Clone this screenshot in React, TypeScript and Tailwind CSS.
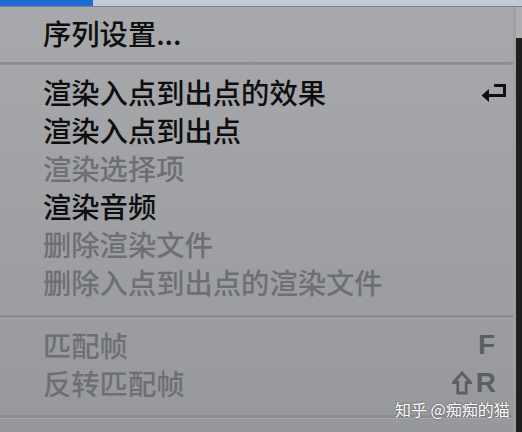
import React from "react";

const font = { fontFamily: '"Noto Sans CJK SC", "Noto Sans", sans-serif' };
const latin = { fontFamily: '"Liberation Sans", Arial, sans-serif' };

function Item({ label, enabled = true, shortcut }: { label: string; enabled?: boolean; shortcut?: React.ReactNode }) {
  return (
    <div className="h-[38px] flex items-center justify-between pl-[43px] pr-[5px] pb-[4px]">
      <span className={`text-[28.3px] leading-none font-medium ${enabled ? "text-[#0e0e0f]" : "text-[#6e6f73]"}`}>{label}</span>
      {shortcut}
    </div>
  );
}

function Sep() {
  return (
    <div className="flex flex-col">
      <div className="h-[3px] bg-[#8d8e92]" />
      <div className="h-px bg-[#a9aaae]" />
    </div>
  );
}

export default function App() {
  return (
    <div className="w-[522px] h-[432px] overflow-hidden flex flex-col relative bg-[#222]" style={font}>
      <div className="h-[6px] flex">
        <div className="w-[93px] bg-[#1f6bd6]" />
        <div className="flex-1 bg-[#c2c9d6]" />
      </div>
      <div className="h-px bg-[#7d7e82]" />
      <div className="flex-1 flex">
        <div className="w-[516px] flex flex-col bg-gradient-to-b from-[#a8a9ac] to-[#97989c] border-r-[3px] border-[#a0a1a4]">
          <div className="h-[9px]" />
          <Item label="序列设置..." />
          <div className="h-[8px]" />
          <Sep />
          <div className="h-[9px]" />
          <Item
            label="渲染入点到出点的效果"
            shortcut={
              <svg width="27" height="20" viewBox="0 0 27 20" className="mt-[2px]">
                <path d="M13 2.5 H23.5 V12.5 H6" fill="none" stroke="#0e0e0f" strokeWidth="3" strokeLinejoin="miter" />
                <path d="M0.5 12.5 L8 6 L8 19 Z" fill="#0e0e0f" />
              </svg>
            }
          />
          <Item label="渲染入点到出点" />
          <Item label="渲染选择项" enabled={false} />
          <Item label="渲染音频" />
          <Item label="删除渲染文件" enabled={false} />
          <Item label="删除入点到出点的渲染文件" enabled={false} />
          <div className="h-[12px]" />
          <Sep />
          <div className="h-[9px]" />
          <Item
            label="匹配帧"
            enabled={false}
            shortcut={<span className="text-[28px] h-[24px] leading-[24px] font-bold text-[#5d5e62] pr-[13px]" style={latin}>F</span>}
          />
          <Item
            label="反转匹配帧"
            enabled={false}
            shortcut={
              <span className="flex items-center gap-[4px] pr-[12px]">
                <svg width="20" height="24" viewBox="0 0 20 24">
                  <path d="M10 2 L18.5 11.5 H14.2 V22 H5.8 V11.5 H1.5 Z" fill="none" stroke="#5d5e62" strokeWidth="2.8" strokeLinejoin="miter" />
                </svg>
                <span className="text-[28px] h-[24px] leading-[24px] font-bold text-[#5d5e62]" style={latin}>R</span>
              </span>
            }
          />
          <div className="h-[11px]" />
          <Sep />
          <div className="flex-1" />
        </div>
        <div className="flex-1 flex flex-col">
          <div className="h-[31px] bg-[#aeafb2]" />
          <div className="flex-1 bg-[#1f1f20]" />
        </div>
      </div>
      <div
        className="absolute left-[395px] top-[401px] text-[16px] leading-none text-white"
        style={{ textShadow: "0 0 2px rgba(0,0,0,0.6)" }}
      >
        知乎 @痴痴的猫
      </div>
    </div>
  );
}
